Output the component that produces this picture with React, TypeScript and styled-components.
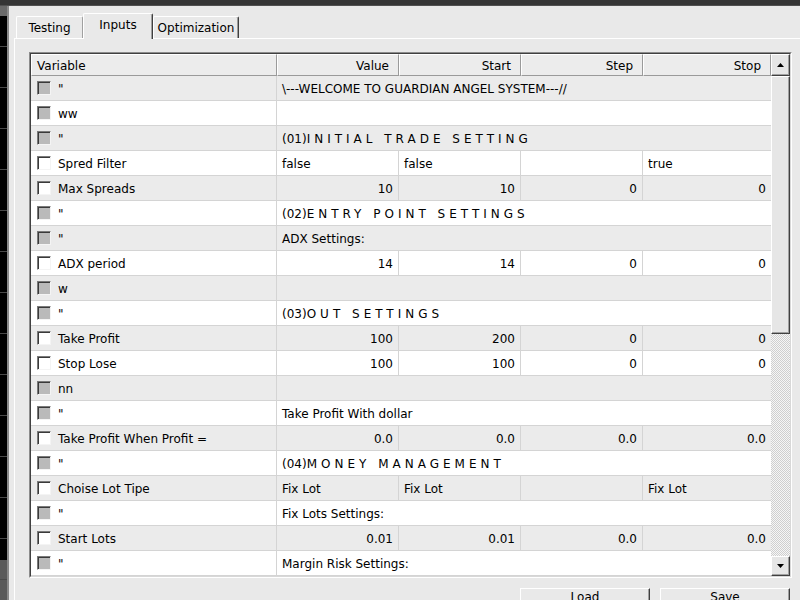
import React from 'react';
import styled, { createGlobalStyle } from 'styled-components';

const Global = createGlobalStyle`
  html, body { margin: 0; padding: 0; background: #2e2e2e; }
  body { font-family: "DejaVu Sans", Verdana, sans-serif; font-size: 12px; color: #000; }
  * { box-sizing: border-box; }
`;

const Screen = styled.div`
  width: 800px;
  height: 600px;
  overflow: hidden;
  display: grid;
  grid-template-rows: 6px 1fr;
  background: #3a3a3a;
`;

const TopBar = styled.div`
  background: #353535;
  border-bottom: 1px solid #505050;
`;

const Body = styled.div`
  display: flex;
  min-height: 0;
`;

const ChartStrip = styled.div`
  width: 9px;
  border-right: 2px solid #8a8a8a;
  background:
    repeating-linear-gradient(to bottom, transparent 0 40px, #4a4a4a 40px 41px),
    linear-gradient(#6a6a6a 0 10px, #000 10px calc(100% - 40px), #5a5a5a calc(100% - 40px));
`;

const Window = styled.div`
  flex: 1;
  display: flex;
  flex-direction: column;
  background: #e9e9e9;
  padding: 7px 0 0 5px;
  min-height: 0;
`;

const TabBar = styled.div`
  display: flex;
  align-items: flex-end;
  height: 25px;
  padding-left: 2px;
  position: relative;
  z-index: 1;
`;

const Tab = styled.div<{ $active?: boolean; $w: number }>`
  width: ${(p) => p.$w}px;
  height: ${(p) => (p.$active ? 26 : 22)}px;
  margin-bottom: ${(p) => (p.$active ? -1 : 0)}px;
  display: flex;
  align-items: center;
  justify-content: center;
  padding-bottom: ${(p) => (p.$active ? 3 : 0)}px;
  background: #e9e9e9;
  border-top: 1px solid #fff;
  border-left: 1px solid #fff;
  border-right: 1px solid ${(p) => (p.$active ? '#404040' : '#a0a0a0')};
  box-shadow: ${(p) => (p.$active ? 'inset -1px 0 0 #a0a0a0' : 'none')};
  border-top-left-radius: 2px;
  border-top-right-radius: 2px;
  white-space: nowrap;
  &:last-child {
    border-right: 1px solid #404040;
    box-shadow: inset -1px 0 0 #9a9a9a;
  }
`;

const TabPage = styled.div`
  flex: 1;
  display: flex;
  flex-direction: column;
  border-top: 1px solid #fff;
  border-left: 1px solid #fff;
  padding: 13px 8px 0 14px;
  min-height: 0;
`;

const Frame = styled.div`
  border: 1px solid;
  border-color: #8c8c8c #fff #fff #8c8c8c;
`;

const FrameInner = styled.div`
  display: flex;
  border: 1px solid;
  border-color: #404040 #d8d8d8 #d8d8d8 #404040;
  background: #fff;
`;

const TableArea = styled.div`
  flex: 1;
  display: flex;
  flex-direction: column;
`;

const COLS = '246px 122px 122px 122px 1fr';

const HeaderRow = styled.div`
  display: grid;
  grid-template-columns: ${COLS};
  height: 22px;
`;

const HeaderCell = styled.div<{ $right?: boolean }>`
  display: flex;
  align-items: center;
  justify-content: ${(p) => (p.$right ? 'flex-end' : 'flex-start')};
  padding: 1px 9px 0 5px;
  background: #ececec;
  border-top: 1px solid #fff;
  border-left: 1px solid #fff;
  border-right: 1px solid #9a9a9a;
  border-bottom: 1px solid #9a9a9a;
`;

const BodyRow = styled.div<{ $alt: boolean }>`
  display: grid;
  grid-template-columns: ${COLS};
  height: 25px;
  border-bottom: 1px solid #d4d4d4;
  background: ${(p) => (p.$alt ? '#ebebeb' : '#ffffff')};
`;

const VarCell = styled.div`
  display: flex;
  align-items: center;
  gap: 7px;
  padding: 1px 0 0 6px;
  border-right: 1px solid #d4d4d4;
  white-space: nowrap;
  overflow: hidden;
`;

const Check = styled.span<{ $muted: boolean }>`
  width: 14px;
  height: 14px;
  flex: none;
  margin-top: -1px;
  border-top: 1px solid #7a7a7a;
  border-left: 1px solid #7a7a7a;
  border-right: 1px solid #f4f4f4;
  border-bottom: 1px solid #f4f4f4;
  box-shadow: inset 1px 1px 0 #3a3a3a;
  background: ${(p) => (p.$muted ? '#bababa' : '#ffffff')};
`;

const Cell = styled.div<{ $right?: boolean; $last?: boolean }>`
  display: flex;
  align-items: center;
  justify-content: ${(p) => (p.$right ? 'flex-end' : 'flex-start')};
  padding: 1px 5px 0;
  border-right: ${(p) => (p.$last ? 'none' : '1px solid #d4d4d4')};
  white-space: nowrap;
  overflow: hidden;
`;

const SpanCell = styled.div`
  grid-column: 2 / -1;
  display: flex;
  align-items: center;
  padding: 1px 5px 0;
  white-space: nowrap;
  overflow: hidden;
`;

const Spaced = styled.span`
  letter-spacing: 4px;
`;

const ScrollBar = styled.div`
  width: 19px;
  display: flex;
  flex-direction: column;
`;

const Raised = styled.div<{ $h?: number }>`
  height: ${(p) => (p.$h ? `${p.$h}px` : 'auto')};
  flex: none;
  display: flex;
  align-items: center;
  justify-content: center;
  background: #e6e6e6;
  border: 1px solid;
  border-color: #fff #404040 #404040 #fff;
  box-shadow: inset -1px -1px 0 #a0a0a0;
`;

const Track = styled.div`
  flex: 1;
  background-color: #f6f6f6;
  background-image: conic-gradient(#cfcfcf 25%, transparent 0 50%, #cfcfcf 0 75%, transparent 0);
  background-size: 2px 2px;
`;

const ButtonRow = styled.div`
  display: flex;
  justify-content: flex-end;
  gap: 10px;
  margin-top: 10px;
  padding-right: 2px;
`;

const Button = styled.div`
  width: 130px;
  height: 22px;
  display: flex;
  align-items: center;
  justify-content: center;
  padding-bottom: 4px;
  background: #e9e9e9;
  border: 1px solid;
  border-color: #fff #404040 #404040 #fff;
  box-shadow: inset -1px -1px 0 #a0a0a0;
`;

const Arrow = ({ up }: { up?: boolean }) => (
  <svg width="7" height="4" viewBox="0 0 7 4">
    <polygon points={up ? '0,4 7,4 3.5,0' : '0,0 7,0 3.5,4'} fill="#000" />
  </svg>
);

type Row =
  | { label: string; kind: 'text'; text?: React.ReactNode }
  | { label: string; kind: 'values'; values: string[]; right: boolean };

const heading = (n: string, title: string) => (
  <>
    ({n})<Spaced>{title}</Spaced>
  </>
);

const rows: Row[] = [
  { label: '"', kind: 'text', text: '\\---WELCOME TO GUARDIAN ANGEL SYSTEM---//' },
  { label: 'ww', kind: 'text' },
  { label: '"', kind: 'text', text: heading('01', 'INITIAL TRADE SETTING') },
  { label: 'Spred Filter', kind: 'values', values: ['false', 'false', '', 'true'], right: false },
  { label: 'Max Spreads', kind: 'values', values: ['10', '10', '0', '0'], right: true },
  { label: '"', kind: 'text', text: heading('02', 'ENTRY POINT SETTINGS') },
  { label: '"', kind: 'text', text: 'ADX Settings:' },
  { label: 'ADX period', kind: 'values', values: ['14', '14', '0', '0'], right: true },
  { label: 'w', kind: 'text' },
  { label: '"', kind: 'text', text: heading('03', 'OUT SETTINGS') },
  { label: 'Take Profit', kind: 'values', values: ['100', '200', '0', '0'], right: true },
  { label: 'Stop Lose', kind: 'values', values: ['100', '100', '0', '0'], right: true },
  { label: 'nn', kind: 'text' },
  { label: '"', kind: 'text', text: 'Take Profit With dollar' },
  { label: 'Take Profit When Profit =', kind: 'values', values: ['0.0', '0.0', '0.0', '0.0'], right: true },
  { label: '"', kind: 'text', text: heading('04', 'MONEY MANAGEMENT') },
  { label: 'Choise Lot Tipe', kind: 'values', values: ['Fix Lot', 'Fix Lot', '', 'Fix Lot'], right: false },
  { label: '"', kind: 'text', text: 'Fix Lots Settings:' },
  { label: 'Start Lots', kind: 'values', values: ['0.01', '0.01', '0.0', '0.0'], right: true },
  { label: '"', kind: 'text', text: 'Margin Risk Settings:' },
];

export default function App() {
  return (
    <>
      <Global />
      <Screen>
        <TopBar />
        <Body>
          <ChartStrip />
          <Window>
            <TabBar>
              <Tab $w={67}>Testing</Tab>
              <Tab $w={70} $active>
                Inputs
              </Tab>
              <Tab $w={86}>Optimization</Tab>
            </TabBar>
            <TabPage>
              <Frame>
                <FrameInner>
                  <TableArea>
                    <HeaderRow>
                      <HeaderCell>Variable</HeaderCell>
                      <HeaderCell $right>Value</HeaderCell>
                      <HeaderCell $right>Start</HeaderCell>
                      <HeaderCell $right>Step</HeaderCell>
                      <HeaderCell $right>Stop</HeaderCell>
                    </HeaderRow>
                    {rows.map((r, i) => (
                      <BodyRow key={i} $alt={i % 2 === 0}>
                        <VarCell>
                          <Check $muted={r.kind === 'text'} />
                          <span>{r.label}</span>
                        </VarCell>
                        {r.kind === 'text' ? (
                          <SpanCell>{r.text}</SpanCell>
                        ) : (
                          r.values.map((v, j) => (
                            <Cell key={j} $right={r.right} $last={j === 3}>
                              {v}
                            </Cell>
                          ))
                        )}
                      </BodyRow>
                    ))}
                  </TableArea>
                  <ScrollBar>
                    <Raised $h={22}>
                      <Arrow up />
                    </Raised>
                    <Raised $h={258} />
                    <Track />
                    <Raised $h={20}>
                      <Arrow />
                    </Raised>
                  </ScrollBar>
                </FrameInner>
              </Frame>
              <ButtonRow>
                <Button>Load</Button>
                <Button>Save</Button>
              </ButtonRow>
            </TabPage>
          </Window>
        </Body>
      </Screen>
    </>
  );
}
